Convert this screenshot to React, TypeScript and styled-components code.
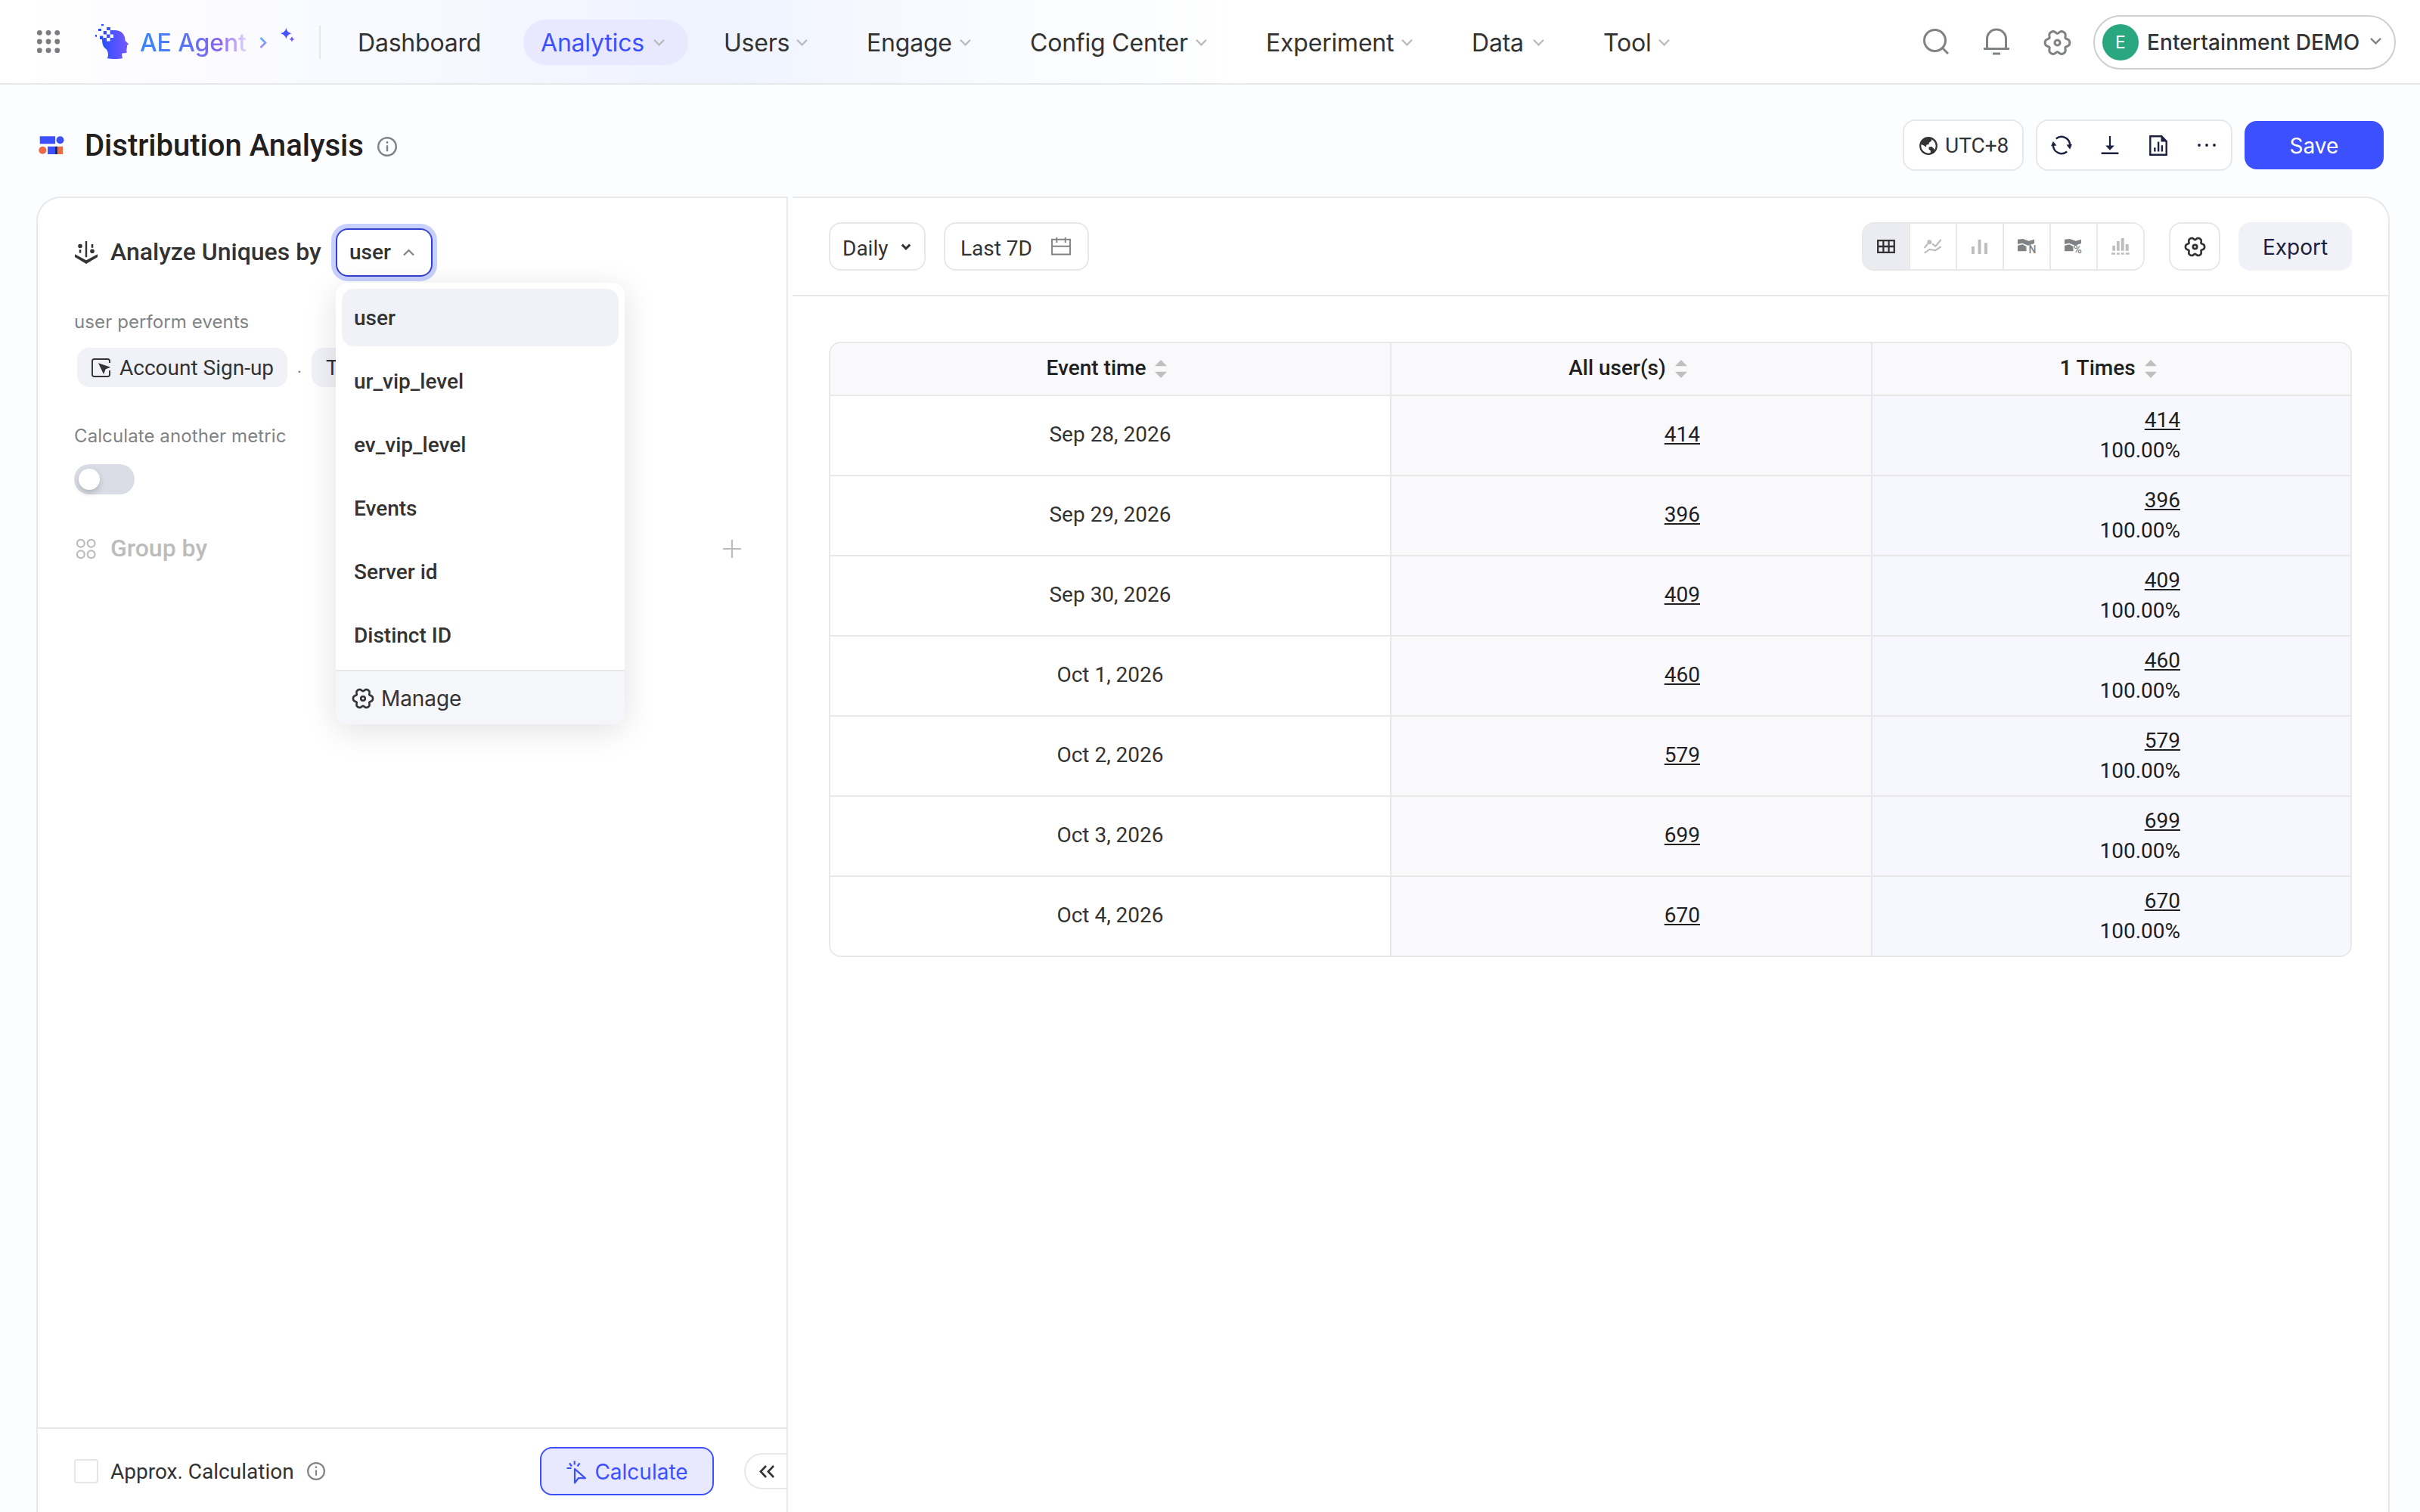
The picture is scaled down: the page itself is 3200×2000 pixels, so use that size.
import React from 'react';
import styled, {createGlobalStyle, css} from 'styled-components';

const GlobalStyle = createGlobalStyle`
  * {
    box-sizing: border-box;
  }
  body {
    margin: 0;
    background: #fcfdff;
    color: #333;
    font-family: Roboto, "Liberation Sans", sans-serif;
    font-size: 28px;
    line-height: 40px;
  }
  svg {
    display: block;
    flex: none;
    overflow: visible;
  }
`

const inter = css`
  font-family: Inter, "Liberation Sans", sans-serif;
`

const Page = styled.div`
  height: 2000px;
  display: flex;
  flex-direction: column;
  overflow: hidden;
`

/* top bar */

const TopBar = styled.header`
  ${inter}
  height: 112px;
  flex: none;
  display: flex;
  align-items: center;
  padding: 2px 32px 0 48px;
  border-bottom: 2px solid #e6e8ea;
  background: linear-gradient(90deg, #fff 0, #fbfbff 300px, #f8faff 480px, #eff3ff 930px, #f7faff 1250px, #fff 1660px);
`

const Brand = styled.a`
  width: 296px;
  display: flex;
  align-items: center;
  margin-left: 47px;
`

const BrandName = styled.span`
  width: 142px;
  margin: 1px 16px 0 15px;
  font-size: 32px;
  font-weight: 500;
  letter-spacing: -0.1px;
  white-space: nowrap;
  color: transparent;
  background: linear-gradient(90deg, #3387ff 0, #5d72f5 45%, #8a63f3 75%, #e6dcff 100%);
  background-clip: text;
`

const Sparkles = styled.span`
  margin: -18px 0 0 18px;
`

const Divider = styled.span`
  width: 2px;
  height: 44px;
  background: #e6e6e6;
`

const Nav = styled.nav`
  display: flex;
  gap: 21px;
  margin-left: 25px;
`

const NavItem = styled.a<{$width: number; $active?: boolean; $plain?: boolean}>`
  width: ${p => p.$width}px;
  height: 60px;
  display: flex;
  align-items: center;
  justify-content: space-between;
  padding: 1px 31px 0 ${p => p.$plain ? 24 : p.$active ? 23 : 26}px;
  border-radius: 30px;
  font-size: 32px;
  font-weight: ${p => p.$active ? 400 : 380};
  letter-spacing: -0.2px;
  white-space: nowrap;
  color: ${p => p.$active ? '#3d50ff' : '#333'};
  background: ${p => p.$active ? '#e8e9ff' : 'transparent'};
`

const TopTools = styled.div`
  display: flex;
  align-items: center;
  margin-left: auto;
  color: #808386;
`

const TopTool = styled.span`
  width: 80px;
  display: flex;
  justify-content: center;
`

const Account = styled.div`
  width: 400px;
  height: 72px;
  display: flex;
  align-items: center;
  margin-left: 8px;
  padding: 0 17px 0 10px;
  border: 2px solid #cfcfcf;
  border-radius: 36px;
  background: #fff;
  font-weight: 480;
  letter-spacing: 0.1px;
  color: #333;
  white-space: nowrap;
  svg {
    margin: -4px 0 0 auto;
    color: #808386;
  }
`

const Avatar = styled.span`
  width: 48px;
  height: 48px;
  border-radius: 50%;
  margin-right: 11px;
  background: #2ba77f;
  color: #fff;
  font-size: 23px;
  font-weight: 400;
  line-height: 48px;
  text-align: center;
`

/* title bar */

const TitleBar = styled.div`
  height: 148px;
  flex: none;
  display: flex;
  align-items: center;
  padding: 12px 48px 0 51px;
`

const Title = styled.h1`
  width: 372px;
  margin: 1px 15px 0 29px;
  font-size: 40px;
  font-weight: 500;
  line-height: 48px;
  white-space: nowrap;
  color: #202020;
  & + svg {
    margin-top: 3px;
  }
`

const Actions = styled.div`
  display: flex;
  align-items: center;
  gap: 16px;
  margin-left: auto;
`

const ActionBox = styled.div`
  height: 68px;
  display: flex;
  align-items: center;
  border: 2px solid #e6e8ea;
  border-radius: 16px;
  background: #fff;
`

const TimeZone = styled(ActionBox)`
  width: 160px;
  gap: 10px;
  padding: 1px 0 0 20px;
`

const IconCell = styled.span`
  width: 64px;
  display: flex;
  justify-content: center;
  color: #1c2140;
`

const Button = styled.button<{$kind: 'primary' | 'soft' | 'outline'; $width: number}>`
  ${inter}
  width: ${p => p.$width}px;
  height: 64px;
  display: flex;
  align-items: center;
  justify-content: center;
  padding: 1px 0 0;
  border: 0;
  border-radius: 16px;
  font-size: 28px;
  font-weight: 380;
  line-height: 40px;
  ${p => p.$kind === 'primary' && 'background: #3d50ff; color: #fff;'}
  ${p => p.$kind === 'soft' && 'background: #f1f2f8; color: #1c2140; margin-left: 24px;'}
  ${p => p.$kind === 'outline' && 'background: #e8e9ff; color: #3d50ff; border: 2px solid #3d50ff;'}
`

/* panels */

const Panels = styled.main`
  flex: 1;
  display: flex;
  gap: 6px;
  padding: 0 40px 0 48px;
`

const Sidebar = styled.section`
  width: 994px;
  display: flex;
  flex-direction: column;
  border: 2px solid #e6e8ea;
  border-bottom: 0;
  border-radius: 32px 0 0 0;
  background: #fff;
`

const SidebarBody = styled.div`
  flex: 1;
  padding: 40px 48px 0;
`

const Row = styled.div`
  display: flex;
  align-items: center;
`

const Heading = styled.h2<{$muted?: boolean}>`
  width: 282px;
  margin: 0 16px;
  padding-bottom: 2px;
  font-size: 32px;
  font-weight: 500;
  white-space: nowrap;
  color: ${p => p.$muted ? '#bcbcbc' : '#333'};
`

const Select = styled.div`
  position: relative;
  width: 128px;
  height: 64px;
  display: flex;
  align-items: center;
  justify-content: space-between;
  padding: 0 22px 0 16px;
  border: 2px solid #3040d4;
  border-radius: 16px;
  box-shadow: 0 0 0 6px #c8d0ff;
  font-weight: 500;
`

const Menu = styled.div`
  position: absolute;
  top: 70px;
  left: -2px;
  z-index: 2;
  width: 382px;
  border-radius: 16px;
  background: #fff;
  box-shadow: 0 8px 44px rgba(0, 0, 0, 0.12);
  overflow: hidden;
`

const MenuList = styled.div`
  display: flex;
  flex-direction: column;
  gap: 8px;
  padding: 8px;
`

const MenuItem = styled.div<{$selected: boolean}>`
  height: 76px;
  padding: 0 16px;
  border-radius: 16px;
  line-height: 78px;
  white-space: nowrap;
  background: ${p => p.$selected ? '#f1f2f8' : 'transparent'};
`

const MenuFooter = styled.div`
  ${inter}
  height: 72px;
  display: flex;
  align-items: center;
  gap: 10px;
  padding: 2px 0 0 22px;
  border-top: 2px solid #e8e8e8;
  background: #f5f6f9;
  font-weight: 380;
  letter-spacing: -0.1px;
`

const Label = styled.div<{$top: number}>`
  ${inter}
  margin-top: ${p => p.$top}px;
  height: 28px;
  padding-top: 1px;
  font-size: 24px;
  line-height: 28px;
  letter-spacing: 0.1px;
  color: #808386;
`

const Tags = styled.div`
  display: flex;
  margin: 21px 0 0 4px;
`

const Tag = styled.span<{$width: number}>`
  width: ${p => p.$width}px;
  height: 52px;
  display: flex;
  align-items: center;
  gap: 11px;
  padding: 1px 0 0 19px;
  border-radius: 16px;
  background: #f1f2f8;
  white-space: nowrap;
`

const Dot = styled.span`
  width: 32px;
  line-height: 50px;
  text-align: center;
  font-size: 24px;
  color: #808386;
`

const Toggle = styled.div`
  width: 80px;
  height: 40px;
  margin-top: 24px;
  padding: 6px;
  border-radius: 20px;
  background: #dadce6;
`

const Knob = styled.div`
  width: 28px;
  height: 28px;
  border-radius: 50%;
  background: #fff;
  box-shadow: 0 4px 8px rgba(0, 35, 11, 0.2);
`

const GroupRow = styled(Row)`
  height: 40px;
  margin-top: 52px;
  padding-right: 12px;
  color: #bcbcbc;
  svg:last-child {
    margin-left: auto;
  }
`

const SidebarFooter = styled.div`
  height: 112px;
  display: flex;
  align-items: center;
  padding: 2px 0 0 48px;
  border-top: 2px solid #e6e8ea;
`

const Checkbox = styled.span`
  width: 32px;
  height: 32px;
  border: 2px solid #e6e6e6;
  border-radius: 4px;
  background: #fff;
`

const Approx = styled.span`
  width: 244px;
  margin: 1px 16px 0 16px;
  white-space: nowrap;
`

const RunBox = styled.div`
  margin: 0 40px 0 auto;
  svg {
    margin-right: 8px;
  }
`

const Collapse = styled.span`
  width: 56px;
  height: 48px;
  display: flex;
  align-items: center;
  padding-left: 18px;
  border: 2px solid #e6e8ea;
  border-right: 0;
  border-radius: 24px 0 0 24px;
`

const Content = styled.section`
  flex: 1;
  border: 2px solid #e6e8ea;
  border-width: 2px 2px 0 0;
  border-radius: 0 32px 0 0;
  background: #fff;
`

const Toolbar = styled.div`
  height: 130px;
  display: flex;
  align-items: center;
  padding: 0 48px;
  border-bottom: 2px solid #e8e8e8;
`

const Picker = styled.div<{$width: number; $pad: number}>`
  width: ${p => p.$width}px;
  height: 64px;
  display: flex;
  align-items: center;
  justify-content: space-between;
  margin-right: 24px;
  padding: 0 ${p => p.$pad}px 0 ${p => p.$pad - 2}px;
  border: 2px solid #e8e8e8;
  border-radius: 16px;
  span {
    padding-top: 5px;
  }
`

const Segments = styled.div`
  display: flex;
  margin-left: auto;
  border: 2px solid #e8e8e8;
  border-radius: 16px;
  overflow: hidden;
`

const Segment = styled.span<{$active?: boolean}>`
  width: 62px;
  height: 60px;
  display: flex;
  align-items: center;
  justify-content: center;
  border-right: 2px solid #e8e8e8;
  background: ${p => p.$active ? '#ebecf2' : '#fff'};
  &:last-child {
    width: 60px;
    border-right: 0;
  }
`

const SettingsButton = styled.span`
  width: 68px;
  height: 64px;
  display: flex;
  align-items: center;
  justify-content: center;
  margin-left: 32px;
  border: 2px solid #e8e8e8;
  border-radius: 16px;
`

/* table */

const Table = styled.div`
  margin: 60px 48px 0;
  border: 2px solid #e8e8e8;
  border-radius: 16px;
  overflow: hidden;
  color: #202020;
`

const TableRow = styled.div`
  display: grid;
  grid-template-columns: 742px 636px 632px;
  border-bottom: 2px solid #e8e8e8;
  &:last-child {
    border-bottom: 0;
  }
`

const HeadCell = styled.div`
  height: 68px;
  display: flex;
  align-items: center;
  justify-content: center;
  gap: 12px;
  padding: 0 9px 3px 0;
  background: #f9f9fb;
  border-right: 2px solid #e8e8e8;
  font-weight: 500;
  &:last-child {
    border-right: 0;
  }
  svg {
    margin-top: 3px;
  }
`

const Cell = styled.div<{$tone?: string; $right?: number; $stacked?: boolean}>`
  height: 104px;
  display: flex;
  flex-direction: column;
  justify-content: center;
  align-items: ${p => p.$right ? 'flex-end' : 'center'};
  padding: 0 ${p => p.$right || 0}px ${p => p.$stacked ? 0 : 3}px 0;
  border-right: 2px solid #e8e8e8;
  background: ${p => p.$tone || '#fff'};
  &:last-child {
    border-right: 0;
  }
`

const DateText = styled.span`
  color: #333;
`

const Count = styled.a`
  text-decoration: underline;
  text-decoration-thickness: 2px;
  text-underline-offset: 2px;
  text-decoration-skip-ink: none;
`

/* icons */

// six soft lobes with a narrow notch between each pair
const gearPath = Array.from({length: 90}, (_, i) => {
  const a = (i / 90) * Math.PI * 2;
  const r = 15.8 - 4 * Math.pow((1 - Math.cos(6 * a)) / 2, 1.8);
  return `${i ? 'L' : 'M'}${(17 + r * Math.cos(a)).toFixed(2)} ${(17 + r * Math.sin(a)).toFixed(2)}`;
}).join('') + 'Z';

const GearIcon: React.FC<{size: number; stroke?: number}> = ({size, stroke = 3}) => (
  <svg width={size} height={size} viewBox="0 0 34 34" fill="none" stroke="currentColor" strokeWidth={stroke} strokeLinejoin="round">
    <path d={gearPath} />
    <circle cx="17" cy="17" r="3.4" />
  </svg>
)

const Chevron: React.FC<{width?: number; up?: boolean; stroke?: number; color?: string}> = ({width = 15, up, stroke = 2.2, color = 'currentColor'}) => (
  <svg width={width} height={width * 0.56} viewBox="0 0 15 8.4" fill="none" stroke={color} strokeWidth={stroke * 15 / width}>
    <path d={up ? 'M1 7.6 7.5 1 14 7.6' : 'M1 .8 7.5 7.4 14 .8'} />
  </svg>
)

const InfoIcon: React.FC<{size: number}> = ({size}) => (
  <svg width={size} height={size} viewBox="0 0 26 26" fill="none" stroke="#808386" strokeWidth="2.4">
    <circle cx="13" cy="13" r="11.8" />
    <path d="M13 11.3v8M13 6v2.8" />
  </svg>
)

const AppsIcon = () => (
  <svg width="31" height="31" viewBox="0 0 31 31" fill="#7c7c80">
    {[4.3, 16, 27.7].map(y => [4.3, 16, 27.7].map(x => <circle key={`${x}-${y}`} cx={x} cy={y - 2} r="3.4" />))}
  </svg>
)

const HeadLogo = () => (
  <svg width="44" height="46" viewBox="0 1 44 46">
    <defs>
      <linearGradient id="head" x1="0" y1="0" x2="1" y2="0">
        <stop offset="0.1" stopColor="#2050ff" />
        <stop offset="1" stopColor="#7a58ff" />
      </linearGradient>
    </defs>
    <path fill="url(#head)" d="M8 0h3v2.2H8zM4 6h4v3H4zM0 14h2v2.800H0zM15 4h5v4h-5zM10.700 9h4.300v4.400h-4.300zM6 15.600h4.400V20H6zM15 13.400h4.600v4.500H15zM19.600 8H26c7 0 11.500 3.500 13 9.600l.7 4.400 4 4c.5.700.1 1.200-1.700 1.700v3l-.6 1 .4 1-.7 1.200.6 2.400c0 1.500-1 2-3 2H36l-1 2 1 5c-6 .900-14 .900-20 0l1-4c0-3-.5-5.500-2.200-8C11 31 9 27 9 20h1.700v-2h4.300v4.500h4.600V18H24v-4.600h-4.400z" />
  </svg>
)

const SparkleIcon = () => (
  <svg width="20" height="20" viewBox="0 0 20 20">
    <defs>
      <linearGradient id="spark" x1="0" y1="0" x2="1" y2="0">
        <stop offset="0" stopColor="#2550ff" />
        <stop offset="1" stopColor="#7a58ff" />
      </linearGradient>
    </defs>
    <path fill="url(#spark)" d="M7.300 0Q8.500 6 14.600 7.300 8.500 8.500 7.300 14.600 6 8.500 0 7.300 6 6 7.300 0ZM15 11.300Q15.600 14.200 18.500 14.800 15.600 15.400 15 18.300 14.300 15.400 11.500 14.800 14.300 14.200 15 11.300Z" />
  </svg>
)

const BrandArrow = () => (
  <svg width="10" height="15" viewBox="0 0 10 15" fill="none" strokeWidth="2.700">
    <defs>
      <linearGradient id="arrow" x1="0" y1="0" x2="0" y2="1">
        <stop offset="0" stopColor="#5aaeff" />
        <stop offset="1" stopColor="#a58cff" />
      </linearGradient>
    </defs>
    <path stroke="url(#arrow)" d="M1.500 1 8 7.500 1.500 14" />
  </svg>
)

const SearchIcon = () => (
  <svg width="36" height="36" viewBox="0 1 36 36" fill="none" stroke="currentColor" strokeWidth="3">
    <circle cx="16.500" cy="16.500" r="14" />
    <path d="m26.500 26.500 7.500 7.500" />
  </svg>
)

const BellIcon = () => (
  <svg width="34" height="36" viewBox="0 1 34 36" fill="none" stroke="currentColor" strokeWidth="3">
    <path d="M4.500 27V14.500a12.500 12.500 0 0 1 25 0V27M0 27.500h34M12 34h10" />
  </svg>
)

const ReportIcon = () => (
  <svg width="32" height="24" viewBox="0 0 32 24">
    <path fill="#3d50ff" d="M1.700.3H22v10H1.700zM12 13.700h10V24H12z" />
    <circle cx="28.500" cy="5.300" r="5" fill="#3d50ff" />
    <circle cx="5.300" cy="18.700" r="5" fill="#ee6a47" />
    <path fill="#1b2a45" d="M22 13.700h3.300V24H22z" />
    <path fill="#ee6a47" d="M25.300 13.700H32V24h-6.700z" />
  </svg>
)

const GlobeIcon = () => (
  <svg width="24" height="24" viewBox="0 0 24 24">
    <circle cx="12" cy="12" r="10.800" fill="none" stroke="#333" strokeWidth="2.200" />
    <path fill="#333" d="M7 1.800 16 1.500 16 5.500 13 7.500 12.500 10 9.500 10.500 9 13.500 6 11.500 1.500 9.500Q3 4 7 1.800ZM12.500 13.500 16.500 13 20 16.500 19 20 14.500 22.500 15 18.500 12.500 16.500Z" />
  </svg>
)

const RefreshIcon = () => (
  <svg width="28" height="26" viewBox="0 0 28 26" fill="none" stroke="currentColor" strokeWidth="2.400">
    <path d="M6.800 4.500A11.200 11.200 0 0 1 25.100 12.500M21.200 21.500A11.200 11.200 0 0 1 2.900 13.500" />
    <path fill="currentColor" stroke="none" d="M0 14.300 2.900 8 7.500 13.400ZM28 11.700 25.100 18.500 20.500 12.600Z" />
  </svg>
)

const DownloadIcon = () => (
  <svg width="24" height="24" viewBox="0 0 24 24" fill="currentColor">
    <path d="M10.900 0h2.200v12.500h4.700L12 18.800l-5.800-6.300h4.700zM.6 21.500h22.800V24H.6z" />
  </svg>
)

const DocIcon = () => (
  <svg width="24" height="27" viewBox="0 0 24 27" fill="none" stroke="currentColor" strokeWidth="2.400">
    <path d="M1.300 1.300h15L22.700 8v17.700H1.300zM7.300 21.500v-5.300M12.100 21.500V8.500M16.900 21.500v-8.300" />
    <path fill="currentColor" stroke="none" d="M15.500.8 23.500 8.500h-8z" />
  </svg>
)

const MoreIcon = () => (
  <svg width="24" height="4" viewBox="0 0 24 4" fill="currentColor">
    <circle cx="2" cy="2" r="1.900" />
    <circle cx="12" cy="2" r="1.900" />
    <circle cx="22" cy="2" r="1.900" />
  </svg>
)

const UniquesIcon = () => (
  <svg width="32" height="30" viewBox="-1 0 32 30" fill="#333">
    <path d="M13.800 0h2.400v21.300h-2.400zM5.700 11.300h2.600v4.200H5.700zM21.700 4h2.600v4.700h-2.600zM0 17.300 15 25.200 30 17.300V21L15 30 0 21z" />
    <circle cx="7" cy="6.500" r="2.800" />
    <circle cx="23" cy="13.300" r="2.800" />
  </svg>
)

const EventIcon = () => (
  <svg width="26" height="26" viewBox="0 0 26 26" fill="none" stroke="#333" strokeWidth="1.900">
    <path d="M24 6V3.500Q24 1 21.500 1H3.500Q1 1 1 3.500v18Q1 24 3.500 24h18q2.500 0 2.500-2.500V16" />
    <path fill="#333" stroke="none" d="M9 6.300 25.300 11.700 18.700 14.200 16 21z" />
  </svg>
)

const GroupIcon = () => (
  <svg width="32" height="26" viewBox="-3 0 32 26" fill="none" stroke="currentColor" strokeWidth="2.200">
    {[5.800, 20.200].map(y => [5.800, 19.600].map(x => <circle key={`${x}-${y}`} cx={x} cy={y} r="4.900" />))}
  </svg>
)

const PlusIcon = () => (
  <svg width="24" height="24" viewBox="0 0 24 24" fill="none" stroke="currentColor" strokeWidth="2.200">
    <path d="M12 0v24M0 12h24" />
  </svg>
)

const RunIcon = () => (
  <svg width="30" height="32" viewBox="0 0 30 32" fill="none" stroke="currentColor" strokeWidth="2.200" strokeLinejoin="round">
    <path d="M11.700 1.500v5M5 4.500l3 4M18.500 4.500l-3 4M1.500 11h6M12 12v18.500l5-6.500 9 .300z" />
  </svg>
)

const CollapseIcon = () => (
  <svg width="21" height="17" viewBox="0 0 21 17" fill="none" stroke="#333" strokeWidth="2.600">
    <path d="M9 1 1.800 8.500 9 16M19 1l-7.200 7.500L19 16" />
  </svg>
)

const CalendarIcon = () => (
  <svg width="26" height="24" viewBox="0 0 26 24" fill="none" stroke="#808386" strokeWidth="1.900">
    <path d="M1 2.800h24v19.700H1zM1 11.800h24M7.300 0v7M18.700 0v7" />
  </svg>
)

const SorterIcon = () => (
  <svg width="16" height="24" viewBox="0 0 16 24" fill="#bfbfbf">
    <path d="M8 0l8 8.200H0zM8 24l8-8.200H0z" />
  </svg>
)

const GridIcon = () => (
  <svg width="24" height="18" viewBox="0 0 24 18" fill="none" stroke="#333" strokeWidth="2.300">
    <path d="M1.200 1.200h21.600v15.600H1.200zM8.400 1v16M15.600 1v16M1 9h22" />
  </svg>
)

const LinesIcon = () => (
  <svg width="24" height="20" viewBox="0 0 24 20" fill="none" stroke="#bdbdbd" strokeWidth="2.200">
    <path d="M.7 12 5 6.500M11 6.300l4.300 3.500L22.700 1M.7 18.700l6.600-4.900 8 1.200 7.400-4.700" />
    <circle cx="7.300" cy="4.300" r="3" fill="#bdbdbd" stroke="none" />
  </svg>
)

const BarsIcon = () => (
  <svg width="22" height="19" viewBox="0 0 22 19" fill="#bdbdbd">
    <path d="M0 9h3.900v10H0zM8.600 0h3.900v19H8.600zM17 4.300h3.900V19H17z" />
  </svg>
)

const AreaIcon: React.FC<{mark: string}> = ({mark}) => (
  <svg width="24" height="20" viewBox="0 0 24 20" fill="#808386">
    <path d="M0 .7 7 0l7.700 2.700L22 .7V6l-8.300 2.700L6 5.700 0 7zM0 8.700l6.300-1.400L11.500 10v6.300H0z" />
    <text x={mark === 'N' ? 14.500 : 11.700} y="19" fontSize={mark === 'N' ? 14 : 15} fontFamily="Roboto, sans-serif" fontWeight="500">{mark}</text>
  </svg>
)

const HistogramIcon = () => (
  <svg width="24" height="22" viewBox="0 0 24 22" fill="#bdbdbd">
    <path d="M1.300 10H5v6.700H1.300zM7 4h3.700v12.700H7zM12.700 0h4v16.700h-4zM18.700 8h4v8.700h-4zM0 19.300h5v2.400H0zM7 19.300h3.700v2.400H7zM12.700 19.300h4v2.400h-4zM18.700 19.300h5v2.400h-5z" />
  </svg>
)

/* data */

const navItems = [
  {label: 'Dashboard', width: 222, plain: true},
  {label: 'Analytics', width: 218, active: true},
  {label: 'Users', width: 168},
  {label: 'Engage', width: 195},
  {label: 'Config Center', width: 291},
  {label: 'Experiment', width: 251},
  {label: 'Data', width: 153},
  {label: 'Tool', width: 145},
];

const subjects = ['user', 'ur_vip_level', 'ev_vip_level', 'Events', 'Server id', 'Distinct ID'];

const columns = ['Event time', 'All user(s)', '1 Times'];

const rows: [string, number][] = [
  ['Sep 28, 2026', 414],
  ['Sep 29, 2026', 396],
  ['Sep 30, 2026', 409],
  ['Oct 1, 2026', 460],
  ['Oct 2, 2026', 579],
  ['Oct 3, 2026', 699],
  ['Oct 4, 2026', 670],
];

const Header: React.FC = () => (
  <TopBar>
    <AppsIcon />
    <Brand>
      <HeadLogo />
      <BrandName>AE Agent</BrandName>
      <BrandArrow />
      <Sparkles><SparkleIcon /></Sparkles>
    </Brand>
    <Divider />
    <Nav>
      {navItems.map(item => (
        <NavItem key={item.label} $width={item.width} $active={item.active} $plain={item.plain}>
          {item.label}
          {!item.plain && <Chevron color="#b8babd" />}
        </NavItem>
      ))}
    </Nav>
    <TopTools>
      <TopTool><SearchIcon /></TopTool>
      <TopTool><BellIcon /></TopTool>
      <TopTool><GearIcon size={35} /></TopTool>
      <Account>
        <Avatar>E</Avatar>
        Entertainment DEMO
        <Chevron stroke={2.400} />
      </Account>
    </TopTools>
  </TopBar>
)

const Query: React.FC = () => (
  <Sidebar>
    <SidebarBody>
      <Row>
        <UniquesIcon />
        <Heading>Analyze Uniques by</Heading>
        <Select>
          user
          <Chevron up color="#808386" />
          <Menu>
            <MenuList>
              {subjects.map((name, i) => <MenuItem key={name} $selected={i === 0}>{name}</MenuItem>)}
            </MenuList>
            <MenuFooter>
              <GearIcon size={28} stroke={3.200} />
              Manage
            </MenuFooter>
          </Menu>
        </Select>
      </Row>
      <Label $top={45}>user perform events</Label>
      <Tags>
        <Tag $width={278}><EventIcon />Account Sign-up</Tag>
        <Dot>.</Dot>
        <Tag $width={180}>T</Tag>
      </Tags>
      <Label $top={50}>Calculate another metric</Label>
      <Toggle><Knob /></Toggle>
      <GroupRow>
        <GroupIcon />
        <Heading $muted>Group by</Heading>
        <PlusIcon />
      </GroupRow>
    </SidebarBody>
    <SidebarFooter>
      <Checkbox />
      <Approx>Approx. Calculation</Approx>
      <InfoIcon size={24} />
      <RunBox>
        <Button $kind="outline" $width={230}><RunIcon />Calculate</Button>
      </RunBox>
      <Collapse><CollapseIcon /></Collapse>
    </SidebarFooter>
  </Sidebar>
)

const Result: React.FC = () => (
  <Content>
    <Toolbar>
      <Picker $width={128} $pad={18}><span>Daily</span><Chevron width={12} stroke={3} color="#333" /></Picker>
      <Picker $width={192} $pad={22}><span>Last 7D</span><CalendarIcon /></Picker>
      <Segments>
        <Segment $active><GridIcon /></Segment>
        <Segment><LinesIcon /></Segment>
        <Segment><BarsIcon /></Segment>
        <Segment><AreaIcon mark="N" /></Segment>
        <Segment><AreaIcon mark="%" /></Segment>
        <Segment><HistogramIcon /></Segment>
      </Segments>
      <SettingsButton><GearIcon size={27} stroke={3.400} /></SettingsButton>
      <Button $kind="soft" $width={150}>Export</Button>
    </Toolbar>
    <Table>
      <TableRow>
        {columns.map(name => <HeadCell key={name}>{name}<SorterIcon /></HeadCell>)}
      </TableRow>
      {rows.map(([date, count]) => (
        <TableRow key={date}>
          <Cell><DateText>{date}</DateText></Cell>
          <Cell $right={226} $tone="#f9f9fb"><Count>{count}</Count></Cell>
          <Cell $right={225} $tone="#f6f7ff" $stacked>
            <Count>{count}</Count>
            <span>100.00%</span>
          </Cell>
        </TableRow>
      ))}
    </Table>
  </Content>
)

const App: React.FC = () => {
  return (
    <Page>
      <GlobalStyle />
      <Header />
      <TitleBar>
        <ReportIcon />
        <Title>Distribution Analysis</Title>
        <InfoIcon size={26} />
        <Actions>
          <TimeZone><GlobeIcon />UTC+8</TimeZone>
          <ActionBox>
            <IconCell><RefreshIcon /></IconCell>
            <IconCell><DownloadIcon /></IconCell>
            <IconCell><DocIcon /></IconCell>
            <IconCell><MoreIcon /></IconCell>
          </ActionBox>
          <Button $kind="primary" $width={184}>Save</Button>
        </Actions>
      </TitleBar>
      <Panels>
        <Query />
        <Result />
      </Panels>
    </Page>
  )
}

export default App;
